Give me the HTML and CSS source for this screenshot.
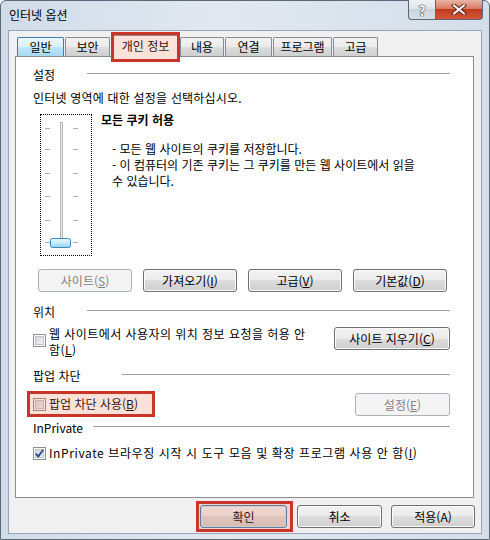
FILE: index.html
```html
<!DOCTYPE html>
<html lang="ko">

<head>
    <meta charset="UTF-8">
    <title>인터넷 옵션</title>
    <link rel="stylesheet" href="styles.css">
</head>

<body>
    <div class="window">
        <div class="titlebar">
            <span class="title">인터넷 옵션</span>
            <div class="caption">
                <span class="cap help">?</span>
                <span class="cap close">
                    <svg width="16" height="11" viewBox="0 0 16 11">
                        <path d="M3 1.5 L13 9.5 M13 1.5 L3 9.5" stroke="#5a2216" stroke-width="4" stroke-linecap="square" fill="none"/>
                        <path d="M3 1.5 L13 9.5 M13 1.5 L3 9.5" stroke="#fff" stroke-width="2" stroke-linecap="square" fill="none"/>
                    </svg>
                </span>
            </div>
        </div>

        <div class="client">
            <div class="tabs">
                <span class="tab hover w47">일반</span>
                <span class="tab w45">보안</span>
                <span class="tab sel">개인 정보</span>
                <span class="tab w44">내용</span>
                <span class="tab w47">연결</span>
                <span class="tab w59">프로그램</span>
                <span class="tab w45">고급</span>
            </div>

            <div class="panel">
                <div class="group-head">
                    <span>설정</span>
                    <span class="rule r-settings"></span>
                </div>
                <div class="desc">인터넷 영역에 대한 설정을 선택하십시오.</div>

                <div class="settings">
                    <div class="slider">
                        <svg width="50" height="140" viewBox="0 0 50 140">
                            <defs>
                                <linearGradient id="thumb" x1="0" y1="0" x2="0" y2="1">
                                    <stop offset="0" stop-color="#eaf8ff"/>
                                    <stop offset="0.5" stop-color="#c4ebfc"/>
                                    <stop offset="1" stop-color="#8fd3f2"/>
                                </linearGradient>
                            </defs>
                            <rect x="19.5" y="7.5" width="2" height="121" fill="#eeeeee" stroke="#b4b4b4"/>
                            <g stroke="#b0b0b0" stroke-width="1">
                                <path d="M4 13.5 H9 M32 13.5 H37"/>
                                <path d="M4 34.5 H9 M32 34.5 H37"/>
                                <path d="M4 58.5 H9 M32 58.5 H37"/>
                                <path d="M4 81.5 H9 M32 81.5 H37"/>
                                <path d="M4 105.5 H9 M32 105.5 H37"/>
                                <path d="M4 127.5 H9 M32 127.5 H37"/>
                            </g>
                            <rect x="9.5" y="123.5" width="20" height="9" rx="2" fill="url(#thumb)" stroke="#3d87bd"/>
                        </svg>
                    </div>
                    <div class="level">
                        <div class="level-title">모든 쿠키 허용</div>
                        <div class="level-text">
                            - 모든 웹 사이트의 쿠키를 저장합니다.<br>
                            - 이 컴퓨터의 기존 쿠키는 그 쿠키를 만든 웹 사이트에서 읽을<br>
                            수 있습니다.
                        </div>
                    </div>
                </div>

                <div class="btn-row">
                    <button class="btn dis">사이트(<u>S</u>)</button>
                    <button class="btn">가져오기(<u>I</u>)</button>
                    <button class="btn">고급(<u>V</u>)</button>
                    <button class="btn">기본값(<u>D</u>)</button>
                </div>

                <div class="group-head head-loc">
                    <span>위치</span>
                    <span class="rule r-loc"></span>
                </div>
                <div class="row loc-row">
                    <span class="chk top"></span>
                    <span class="chk-label two">웹 사이트에서 사용자의 위치 정보 요청을 허용 안<br>함(<u>L</u>)</span>
                    <button class="btn clear">사이트 지우기(<u>C</u>)</button>
                </div>

                <div class="group-head head-popup">
                    <span>팝업 차단</span>
                    <span class="rule r-popup"></span>
                </div>
                <div class="row popup-row">
                    <div class="mark-box">
                        <span class="chk"></span>
                        <span class="chk-label">팝업 차단 사용(<u>B</u>)</span>
                    </div>
                    <button class="btn dis popup-set">설정(<u>E</u>)</button>
                </div>

                <div class="group-head head-inp">
                    <span>InPrivate</span>
                    <span class="rule r-inp"></span>
                </div>
                <div class="row inp-row">
                    <span class="chk">
                        <svg width="11" height="11" viewBox="0 0 11 11">
                            <path d="M1.8 5.6 L4.3 8.4 L9.2 1.8" stroke="#2f4c95" stroke-width="1.9" fill="none"/>
                        </svg>
                    </span>
                    <span class="chk-label wide">InPrivate 브라우징 시작 시 도구 모음 및 확장 프로그램 사용 안 함(<u>I</u>)</span>
                </div>
            </div>

            <div class="footer">
                <button class="btn ok">확인</button>
                <button class="btn cancel">취소</button>
                <button class="btn apply">적용(A)</button>
            </div>
        </div>
    </div>
</body>

</html>
```

FILE: styles.css
```css
* {
    margin: 0;
    padding: 0;
    box-sizing: border-box;
}

body {
    font-family: "Noto Sans CJK KR", "Noto Sans", sans-serif;
    font-size: 12px;
    color: #000;
    background: #fff;
}

.window {
    width: 490px;
    height: 540px;
    display: flex;
    flex-direction: column;
    border: 1px solid #5d6876;
    border-radius: 6px 6px 0 0;
    background: linear-gradient(to right, #d1dce9, #e1e8f0 45%, #d4deea);
}

.titlebar {
    height: 29px;
    display: flex;
    justify-content: space-between;
    align-items: flex-start;
}

.title {
    margin: 6px 0 0 8px;
    line-height: 16px;
    font-size: 12px;
}

.caption {
    display: flex;
    margin-right: 6px;
    margin-top: -1px;
}

.cap {
    height: 20px;
    display: flex;
    align-items: center;
    justify-content: center;
    border: 1px solid #5b6677;
    border-top: none;
}

.help {
    width: 27px;
    border-radius: 0 0 0 4px;
    border-right: none;
    background: linear-gradient(#eef2f7, #dbe3ec 50%, #c9d3de 50%, #d8e0e9);
    color: #fff;
    font-weight: bold;
    font-size: 14px;
    text-shadow: 0 0 1px #333, 0 0 1px #333, 0 0 1px #333;
}

.close {
    width: 48px;
    border-radius: 0 0 4px 0;
    background: linear-gradient(#eab5a6, #d9735c 50%, #c23b1d 50%, #d5573a);
}

.client {
    flex: 1;
    margin: 0 7px 5px 7px;
    border: 1px solid #9aa6b5;
    background: #f0f0f0;
    display: flex;
    flex-direction: column;
}

/* tabs */
.tabs {
    display: flex;
    align-items: flex-end;
    height: 19px;
    margin-top: 6px;
    padding-left: 8px;
}

.tab {
    height: 19px;
    margin-right: 1px;
    border: 1px solid #898c95;
    border-bottom: none;
    border-radius: 2px 2px 0 0;
    background: linear-gradient(#f2f2f2, #ebebeb 50%, #dddddd 50%, #cfcfcf);
    text-align: center;
    line-height: 17px;
    font-size: 12px;
}

.tab.hover {
    border-color: #3c7fb1;
    background: linear-gradient(#eaf6fd, #d9f0fc 50%, #bee6fd 50%, #a7d9f5);
}

.w44 { width: 44px; }
.w45 { width: 45px; }
.w47 { width: 47px; }
.w59 { width: 59px; }

.tab.sel {
    position: relative;
    z-index: 1;
    width: 67px;
    height: 22px;
    margin: 0 1px -1px 1px;
    background: #fff;
    line-height: 19px;
}

.tab.sel::after,
.mark-box::after,
.ok::after {
    content: "";
    position: absolute;
    border: 3px solid #c9352b;
    background: rgba(230, 110, 70, 0.2);
}

.tab.sel::after {
    left: -2px;
    right: -2px;
    top: -4px;
    bottom: -5px;
}

/* panel */
.panel {
    height: 442px;
    margin: 0 7px 0 6px;
    border: 1px solid #898c95;
    background: #fff;
    padding: 10px 23px 0 17px;
}

.group-head {
    display: flex;
    align-items: center;
    justify-content: space-between;
    height: 16px;
    line-height: 16px;
}

.rule {
    height: 1px;
    background: #a0a0a0;
    margin-bottom: 3px;
}

.r-settings { width: 363px; }
.r-loc { width: 363px; }
.r-popup { width: 328px; }
.r-inp { width: 357px; }

.desc {
    margin-top: 7px;
    line-height: 16px;
    letter-spacing: 0.2px;
}

.settings {
    display: flex;
    margin-top: 8px;
}

.slider {
    width: 52px;
    height: 142px;
    margin-left: 7px;
    border: 1px dotted #000;
}

.slider svg {
    display: block;
}

.level {
    margin: -2px 0 0 9px;
}

.level-title {
    font-weight: bold;
    line-height: 16px;
}

.level-text {
    margin: 13px 0 0 11px;
    line-height: 16px;
}

/* buttons */
.btn {
    height: 23px;
    border: 1px solid #707070;
    border-radius: 3px;
    background: linear-gradient(#f2f2f2, #ebebeb 50%, #dddddd 50%, #cfcfcf);
    box-shadow: inset 0 0 0 1px #fbfbfb;
    font-family: inherit;
    font-size: 12px;
    color: #000;
    line-height: 19px;
}

.btn.dis {
    border-color: #adb2b5;
    background: #f4f4f4;
    box-shadow: none;
    color: #838383;
}

.btn-row {
    display: flex;
    gap: 11px;
    margin-top: 13px;
    padding-left: 5px;
}

.btn-row .btn {
    width: 94px;
}

.head-loc { margin-top: 12px; }
.head-popup { margin-top: 10px; }
.head-inp { margin-top: 4px; }

.row {
    display: flex;
    align-items: center;
}

.loc-row {
    align-items: flex-start;
    margin-top: 7px;
}

.chk {
    position: relative;
    flex: none;
    width: 13px;
    height: 13px;
    border: 1px solid #8e8f8f;
    background: linear-gradient(135deg, #cfd3d8, #f7f7f7);
    box-shadow: inset 0 0 0 1px #fff, inset 0 0 0 2px #bfc3c8;
}

.chk svg {
    display: block;
    margin: 0;
}

.chk.top {
    margin-top: 7px;
}

.chk-label {
    margin-left: 3px;
    line-height: 16px;
}

.chk-label.two {
    margin-top: -1px;
    width: 282px;
    letter-spacing: 0.45px;
}

.chk-label.wide {
    letter-spacing: 0.6px;
}

.clear {
    width: 116px;
    margin-left: auto;
}

.popup-row {
    justify-content: space-between;
    margin-top: 9px;
}

.mark-box {
    position: relative;
    display: flex;
    align-items: center;
    width: 128px;
    height: 26px;
    margin: -2px 0 -1px -6px;
    padding-left: 6px;
}

.mark-box::after {
    inset: 0;
}

.popup-set {
    width: 95px;
}

.inp-row {
    margin-top: 9px;
}

/* footer */
.footer {
    display: flex;
    justify-content: flex-end;
    padding: 7px 6px 0 0;
}

.ok {
    position: relative;
    width: 87px;
    margin-right: 10px;
    border-color: #3c7fb1;
    box-shadow: inset 0 0 0 1px #c7eafc;
}

.ok::after {
    left: -5px;
    right: -7px;
    top: -5px;
    bottom: -5px;
}

.cancel {
    width: 85px;
    margin-right: 9px;
}

.apply {
    width: 84px;
}
```
